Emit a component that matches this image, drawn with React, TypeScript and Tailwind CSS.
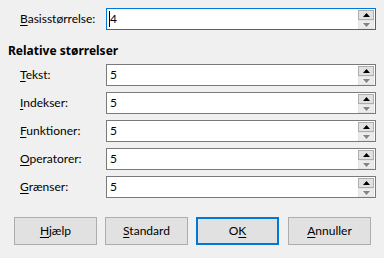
import React from "react";

function Spin() {
  return (
    <div className="absolute right-[1px] top-[1px] flex flex-col w-[16px]">
      <div className="h-[10px] w-[16px] border border-[#adadad] bg-[#e1e1e1] flex items-center justify-center">
        <svg width="7" height="4" viewBox="0 0 7 4"><path d="M0 4 L3.5 0 L7 4 Z" fill="#000" /></svg>
      </div>
      <div className="h-[9px] w-[16px] border border-[#e3e3e3] bg-[#ececec] flex items-center justify-center">
        <svg width="7" height="4" viewBox="0 0 7 4"><path d="M0 0 L7 0 L3.5 4 Z" fill="#838383" /></svg>
      </div>
    </div>
  );
}

function Field({ value, focused }: { value: string; focused?: boolean }) {
  return (
    <div
      className={`relative shrink-0 w-[270px] h-[22px] bg-white border ${
        focused ? "border-[#0078d7]" : "border-[#7a7a7a]"
      } flex items-center pl-[3px]`}
    >
      {focused && <div className="absolute left-[2px] top-[2px] w-[1px] h-[16px] bg-black" />}
      <span className="text-[12px] leading-[16px] text-black">{value}</span>
      <Spin />
    </div>
  );
}

function Label({ first, rest }: { first: string; rest: string }) {
  return (
    <div className="w-[106px] shrink-0 pl-[20px] h-[22px] text-[12px] leading-[22px] text-black whitespace-nowrap">
      <span className="underline underline-offset-2">{first}</span>
      {rest}
    </div>
  );
}

function Btn({ first, rest, pre, primary }: { first: string; rest: string; pre?: string; primary?: boolean }) {
  return (
    <div
      className={`w-[83px] h-[28px] shrink-0 bg-[#e1e1e1] flex items-center justify-center text-[12px] leading-[16px] text-black ${
        primary ? "border-2 border-[#0078d7]" : "border border-[#adadad]"
      }`}
    >
      <span>
        {pre}
        <span className="underline underline-offset-2">{first}</span>
        {rest}
      </span>
    </div>
  );
}

export default function App() {
  const rows: [string, string][] = [
    ["T", "ekst:"],
    ["I", "ndekser:"],
    ["F", "unktioner:"],
    ["O", "peratorer:"],
    ["G", "rænser:"],
  ];
  return (
    <div
      className="w-[384px] h-[258px] bg-[#f0f0f0] overflow-hidden pt-[8px] text-[#000]"
      style={{ fontFamily: 'Lato, "Noto Sans", sans-serif' }}
    >
      <div className="flex h-[22px]">
        <Label first="B" rest="asisstørrelse:" />
        <Field value="4" focused />
      </div>
      <div
        className="pl-[8px] mt-[13px] h-[16px] text-[12px] leading-[16px] font-bold text-black"
        style={{ fontFamily: '"Noto Sans", sans-serif' }}
      >
        Relative størrelser
      </div>
      <div className="flex flex-col gap-[6px] mt-[5px]">
        {rows.map(([f, r]) => (
          <div key={f} className="flex h-[22px]">
            <Label first={f} rest={r} />
            <Field value="5" />
          </div>
        ))}
      </div>
      <div className="flex mt-[19px] pl-[14px] h-[28px]">
        <Btn first="H" rest="jælp" />
        <div className="w-[8px] shrink-0" />
        <Btn first="S" rest="tandard" />
        <div className="w-[8px] shrink-0" />
        <Btn pre="O" first="K" rest="" primary />
        <div className="w-[9px] shrink-0" />
        <Btn first="A" rest="nnuller" />
      </div>
    </div>
  );
}
